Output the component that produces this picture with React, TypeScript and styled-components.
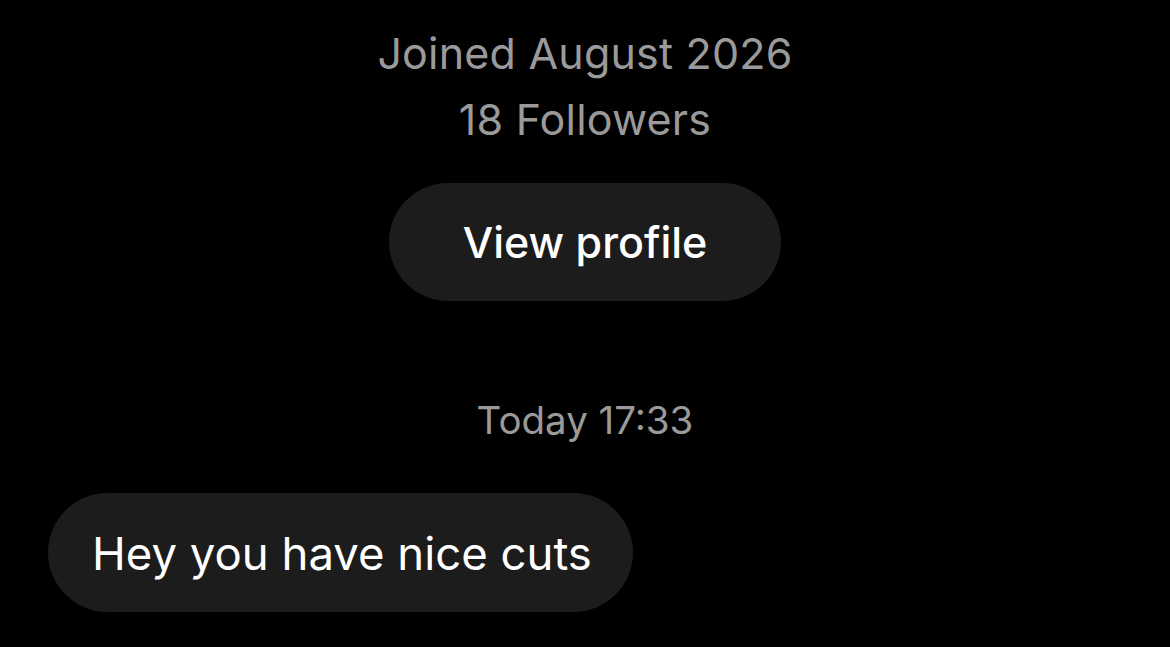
import React from "react";
import styled, { createGlobalStyle } from "styled-components";

const Global = createGlobalStyle`
  html, body { margin: 0; padding: 0; background: #000; }
  body { font-family: Inter, "Noto Sans", sans-serif; -webkit-font-smoothing: antialiased; }
`;

const Screen = styled.div`
  width: 1170px;
  height: 647px;
  background: #000;
  display: flex;
  flex-direction: column;
  overflow: hidden;
`;

const Header = styled.div`
  display: flex;
  flex-direction: column;
  align-items: center;
  padding-top: 20px;
`;

const Meta = styled.div`
  color: #9a9a9a;
  font-size: 43px;
  line-height: 66px;
  letter-spacing: 0.2px;
`;

const ProfileButton = styled.button`
  margin-top: 31px;
  width: 392px;
  height: 118px;
  border: none;
  border-radius: 59px;
  background: #1c1c1c;
  color: #fff;
  font-family: Inter, "Noto Sans", sans-serif;
  font-size: 43px;
  font-weight: 500;
  display: flex;
  align-items: center;
  justify-content: center;
`;

const Timestamp = styled.div`
  align-self: center;
  margin-top: 91px;
  color: #9a9a9a;
  font-size: 38.5px;
  line-height: 56px;
`;

const Bubble = styled.div`
  align-self: flex-start;
  margin: 45px 0 0 48px;
  height: 119px;
  padding: 2px 41px 0 44px;
  box-sizing: border-box;
  border-radius: 60px;
  background: #1c1c1c;
  color: #fff;
  font-size: 45.5px;
  display: flex;
  align-items: center;
`;

export default function App() {
  return (
    <>
      <Global />
      <Screen>
        <Header>
          <Meta>Joined August 2026</Meta>
          <Meta>18 Followers</Meta>
          <ProfileButton>View profile</ProfileButton>
        </Header>
        <Timestamp>Today 17:33</Timestamp>
        <Bubble>Hey you have nice cuts</Bubble>
      </Screen>
    </>
  );
}
